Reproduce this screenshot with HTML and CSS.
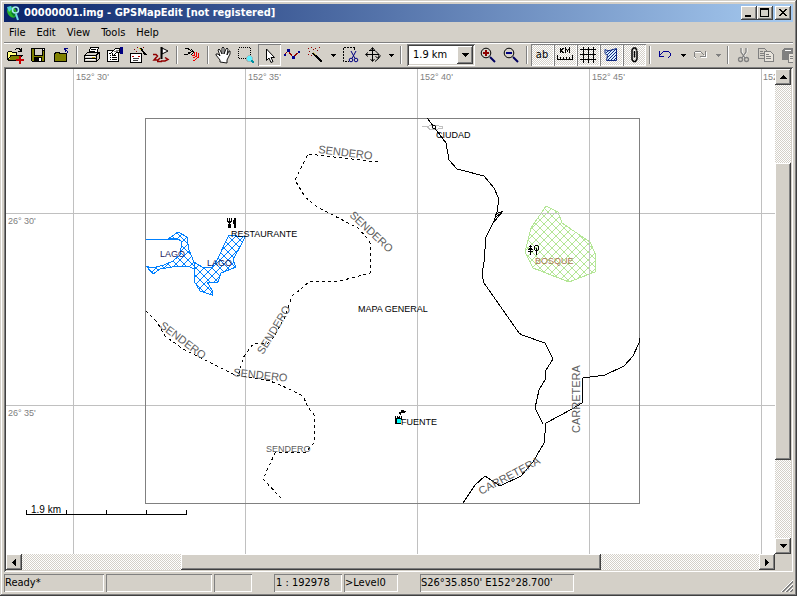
FILE: index.html
```html
<!DOCTYPE html>
<html lang="en">
<head>
<meta charset="utf-8">
<title>00000001.img - GPSMapEdit [not registered]</title>
<link rel="stylesheet" href="styles.css">
</head>
<body>
<div class="window">
  <header class="titlebar">
    <svg class="app-icon" width="16" height="16" viewBox="0 0 16 16"><ellipse cx="6" cy="7" rx="4.500" ry="6" fill="#28b428" transform="rotate(-30 6 7)"/><path d="M1 2l4-1 1 3-3 3z" fill="#48c8d8"/><path d="M5 8l3-3 2 4-2 3z" fill="#0a7830"/><circle cx="9.500" cy="5" r="3" fill="none" stroke="#a8e8f0" stroke-width="1.500"/><path d="M10 9l2 6" stroke="#70d8e8" stroke-width="2"/></svg>
    <h1 class="title">00000001.img - GPSMapEdit [not registered]</h1>
    <button class="caption" aria-label="Minimize"><svg width="12" height="10" shape-rendering="crispEdges"><path d="M2 7h6v2H2z"/></svg></button>
    <button class="caption" aria-label="Maximize"><svg width="12" height="10" shape-rendering="crispEdges"><path d="M1 0h9v9H1zM2 2v6h7V2z" fill-rule="evenodd"/></svg></button>
    <button class="caption close" aria-label="Close"><svg width="12" height="10" shape-rendering="crispEdges"><path d="M2 1h2v1h1v1h2V2h1V1h2v1H9v1H8v1H7v1h1v1h1v1h1v1H8V7H7V6H5v1H4v1H2V7h1V6h1V5h1V4H4V3H3V2H2z"/></svg></button>
  </header>

  <nav class="menu">
    <button>File</button><button>Edit</button><button>View</button><button>Tools</button><button>Help</button>
  </nav>

  <div class="toolbar">
    <button class="tool" aria-label="Open"><svg viewBox="0 0 16 16"><path d="M0 5h1V4h3v1h5v3H4l-3 5H0z" fill="#ffff80"/><path d="M.5 13V5.500l1-1h3l1 1h4V8M.5 13.500L4 8.500h11L11 13.500H.5" fill="none" stroke="#000"/><path d="M4.500 9h9l-3 4h-9z" fill="#808000"/><path d="M8 2.500l2-1h2l2 2M14.500 1v3.500H11" fill="none" stroke="#000"/><path d="M12 9h2v3h3v2h-3v3h-2v-3H9v-2h3z" fill="#c80000"/></svg></button>
    <button class="tool" aria-label="Save"><svg viewBox="0 0 16 16"><path d="M1 1h14v14H2l-1-1z"/><path d="M2 2h2v7h9V4h1v10h-2v-4H4v4H2z" fill="#808000"/><path d="M5 2h7v6H5z" fill="#d4d0c8"/><path d="M13 2h1v1h-1zM9 11h2v3H9z" fill="#fff"/></svg></button>
    <button class="tool" aria-label="Close file"><svg viewBox="0 0 16 16"><path d="M1.500 14.500v-8h1v-1h4v1h7v8z" fill="#808000" stroke="#000"/><path d="M11 1h4v1h-2v1h1v1h1v2h-1V4h-1v1h-1v-2h-1z" fill="#000080"/></svg></button>
    <span class="sep"></span>
    <button class="tool" aria-label="Print"><svg viewBox="0 0 16 16"><path d="M4.500 6.500l2-6h8l-2 6z" fill="#fff" stroke="#000"/><path d="M7 2.500h5M6 4.500h5" stroke="#000"/><path d="M.5 8.500l3-3h12v6l-3 3H.5z" fill="#d4d0c8" stroke="#000"/><path d="M1 8.500h11l3-3M12.500 8v6M1 11.500h11" fill="none" stroke="#000"/><path d="M2 9.500h9M2 12.500h9" stroke="#fff" fill="none"/><path d="M8 10h3v1H8z" fill="#c0a000"/></svg></button>
    <button class="tool" aria-label="Properties"><svg viewBox="0 0 16 16"><path d="M.5 3.500h11v11H.5z" fill="#fff" stroke="#000"/><path d="M2 6.500h2M3 8.500h1M5 8.500h4M3 10.500h1M5 10.500h5M3 12.500h1M5 12.500h5" stroke="#000"/><path d="M4.500 5.500l4-4h4v4h-3l-3 3z" fill="#fff" stroke="#000"/><path d="M7 4.500h4M9 3.500h3" stroke="#808080"/><path d="M13 0h3v7h-3z" fill="#000080"/></svg></button>
    <button class="tool" aria-label="Map properties"><svg viewBox="0 0 16 16"><path d="M.5 6.500h11v9H.5z" fill="#fff" stroke="#000"/><path d="M2 9.500h2M8 9.500h2" stroke="#c00000"/><path d="M3 11.500h6M3 13.500h5" stroke="#404040"/><path d="M10 1l6 7" stroke="#000" stroke-width="2"/><path d="M9 1l2 2" stroke="#e0d000"/><path d="M4 2h1v1H4zM7 0h1v1H7zM6 4h1v1H6zM13 0h1v1h-1z" fill="#800000"/></svg></button>
    <button class="tool" aria-label="Waypoints and tracks"><svg viewBox="0 0 16 16" class="smooth"><path d="M9 1l6 3-6 3z" fill="#fff" stroke="#000"/><path d="M8.500 0v12" stroke="#000" stroke-width="2"/><path d="M0 7.500h3l1.500 1.500-3.500 4h4l2-2M8 14h4l3-1.500-3-2M4 14.500h5" fill="none" stroke="#900000" stroke-width="1.500"/></svg></button>
    <span class="sep"></span>
    <button class="tool" aria-label="GPS"><svg viewBox="0 0 16 16"><path d="M1 1.500h3l4 3-5 3H0M4 5.500h3M7 2l3 3-3 3" fill="none" stroke="#000"/><path d="M10 5l1 3-3 1M12 5l1 4-4 2M14.500 6v4l-5 4" fill="none" stroke="#f00000"/></svg></button>
    <span class="sep"></span>
    <button class="tool" aria-label="Pan"><svg viewBox="0 0 16 16" class="smooth"><path d="M5 15v-2L1 8V7h2l2 2-2-6 1-1 1 1 2 4V1l1-1 1 1v6l2-5 1-1 1 1-1 6 2-4h1v3l-3 6v3z" fill="#fff" stroke="#000" stroke-width=".9"/></svg></button>
    <button class="tool" aria-label="Zoom area"><svg viewBox="0 0 16 16"><path d="M.5 .5h12v11H.5z" fill="none" stroke="#000" stroke-dasharray="1 1"/><circle cx="11.500" cy="11.500" r="3" fill="#60f0ff" stroke="#a0b8b8"/><path d="M13.500 13.500l2.500 2.500" stroke="#0090a0" stroke-width="2"/></svg></button>
    <button class="tool pressed" aria-label="Select" aria-pressed="true"><svg viewBox="0 0 16 16" class="smooth"><path d="M5.500 2v11.500l2.500-2.500 2 4.500 2-1-2-4h3.500z" fill="#fff" stroke="#000"/></svg></button>
    <button class="tool" aria-label="Edit nodes"><svg viewBox="0 0 16 16"><path d="M0 8l4-4 5 6 6-5" fill="none" stroke="#900000"/><path d="M3 2h3v3H3zM8 9h3v3H8zM0 7h2v2H0zM14 4h2v2h-2z" fill="#000090"/></svg></button>
    <button class="tool" aria-label="Create object"><svg viewBox="0 0 16 16"><path d="M6 6l9 9" stroke="#000" stroke-width="2"/><path d="M6 5l3 3" stroke="#d0c060"/><path d="M1 1h1v1H1zM4 0h1v1H4zM8 1h1v1H8zM2 4h1v1H2zM10 3h1v1h-1zM6 2h1v1H6zM1 7h1v1H1zM4 8h1v1H4zM12 0h1v1h-1z" fill="#900000"/></svg></button>
    <button class="drop" aria-label="Create options"><svg viewBox="0 0 5 3"><path d="M0 0h5v1H4v1H3v1H2V2H1V1H0z"/></svg></button>
    <button class="tool" aria-label="Trim area"><svg viewBox="0 0 16 16" class="smooth"><path d="M13 .5H1.500v14H7M12.500 1v3" fill="none" stroke="#000" stroke-dasharray="2 1"/><path d="M9 4l4 7.500M14 4l-4 7.500" stroke="#000080"/><circle cx="9" cy="13" r="1.800" fill="none" stroke="#000080"/><circle cx="14" cy="13" r="1.800" fill="none" stroke="#000080"/></svg></button>
    <button class="tool" aria-label="Move map"><svg viewBox="0 0 16 16" class="smooth"><path d="M7.500 1v13M1 7.500h13M5.500 3l2-2.500 2 2.500M3 5.500L.5 7.500 3 9.500M5.500 12l2 2.500 2-2.500" stroke="#000" fill="none"/><path d="M4 3.500h6l4 4-.5 4-3.500 3M15.500 8.500l-2 3-3-2" fill="none" stroke="#000"/></svg></button>
    <button class="drop" aria-label="Move options"><svg viewBox="0 0 5 3"><path d="M0 0h5v1H4v1H3v1H2V2H1V1H0z"/></svg></button>
    <span class="sep"></span>
    <div class="combo">
      <select aria-label="Scale"><option>1.9 km</option></select>
      <span class="combo-arrow"><svg width="7" height="4" viewBox="0 0 7 4" shape-rendering="crispEdges"><path d="M0 0h7v1H6v1H5v1H4v1H3V3H2V2H1V1H0z"/></svg></span>
    </div>
    <button class="tool" aria-label="Zoom in"><svg viewBox="0 0 16 16" class="smooth"><circle cx="6" cy="6" r="4.800" fill="none" stroke="#000"/><path d="M3 5h2V3h2v2h2v2H7v2H5V7H3z" fill="#900000"/><path d="M10 10l5 5" stroke="#000060" stroke-width="2"/></svg></button>
    <button class="tool" aria-label="Zoom out"><svg viewBox="0 0 16 16" class="smooth"><circle cx="6" cy="6" r="4.800" fill="none" stroke="#000"/><path d="M3 5h6v2H3z" fill="#000080"/><path d="M10 10l5 5" stroke="#000060" stroke-width="2"/></svg></button>
    <span class="sep"></span>
    <button class="tool pressed checked" aria-label="Labels" aria-pressed="true"><span class="ab">ab</span></button>
    <button class="tool pressed checked" aria-label="Scale ruler" aria-pressed="true"><svg viewBox="0 0 16 16"><path d="M3.500 1v5M6.500 1L4 3.500 6.500 6M8.500 6V1l2 3 2-3v5M.5 8v4.500h15V8M3.500 10v2M6.500 10v2M9.500 10v2M12.500 10v2" fill="none" stroke="#000"/></svg></button>
    <button class="tool pressed checked" aria-label="Grid" aria-pressed="true"><svg viewBox="0 0 16 16"><path d="M3.500 0v16M8.500 0v16M13.500 0v16M0 2.500h16M0 7.500h16M0 12.500h16" stroke="#000"/></svg></button>
    <button class="tool pressed checked" aria-label="Fill areas" aria-pressed="true"><svg viewBox="0 0 16 16" class="smooth"><path d="M2 2.500l3 1.500 8.500-2.500v12H3.500l1-5-2.500-2z" fill="#d8f0ff" stroke="#102880"/><path d="M3 6l3-3M4 8l6-6M4 11l9-9M4 14l9-9M7 14l6-6M10 14l3-3" stroke="#102880"/></svg></button>
    <button class="tool pressed checked" aria-label="Attachments" aria-pressed="true"><svg viewBox="0 0 16 16" class="smooth"><path d="M11 4v8l-1.500 2.500h-2L6 12.500V3l1.500-2h2L11 3.500M8.500 4v6.500" fill="none" stroke="#000" stroke-width="1.500"/></svg></button>
    <span class="sep"></span>
    <button class="tool" aria-label="Undo"><svg viewBox="0 0 16 16"><path d="M2 4v5h5M3 8l4-4h4l2 2v3l-2 2" fill="none" stroke="#000090"/></svg></button>
    <button class="drop" aria-label="Undo list"><svg viewBox="0 0 5 3"><path d="M0 0h5v1H4v1H3v1H2V2H1V1H0z"/></svg></button>
    <button class="tool" aria-label="Redo" disabled><svg viewBox="0 0 16 16"><path d="M14 5v5H9M13 9L9 5H4L2 7v3l2 2" fill="none" stroke="#fff"/><path d="M13 4v5H8M12 8L8 4H4L2 6v3l2 2" fill="none" stroke="#808080"/></svg></button>
    <button class="drop" aria-label="Redo list" disabled><svg viewBox="0 0 5 3"><path d="M0 0h5v1H4v1H3v1H2V2H1V1H0z" fill="#808080"/></svg></button>
    <span class="sep"></span>
    <button class="tool" aria-label="Cut" disabled><svg viewBox="0 0 16 16" class="smooth"><path d="M7 1v4l4 6M12 1v4l-4 6" fill="none" stroke="#fff"/><path d="M6 1v4l4 6M11 1v4l-4 6" fill="none" stroke="#808080" stroke-width="1.300"/><circle cx="5.500" cy="12.500" r="2" fill="none" stroke="#808080" stroke-width="1.300"/><circle cx="11.500" cy="12.500" r="2" fill="none" stroke="#808080" stroke-width="1.300"/></svg></button>
    <button class="tool" aria-label="Copy" disabled><svg viewBox="0 0 16 16"><path d="M.5 1.500h6l3 3v7h-9z" fill="#d4d0c8" stroke="#808080"/><path d="M2 4.500h3M2 6.500h4M2 8.500h4" stroke="#808080"/><path d="M6.500 4.500h6l3 3v7h-9z" fill="#e8e4dc" stroke="#808080"/><path d="M8 7.500h3M8 9.500h5M8 11.500h5" stroke="#808080"/></svg></button>
    <button class="tool" aria-label="Paste" disabled><svg viewBox="0 0 16 16"><path d="M1 3l2-2h8l2 2v10H1z" fill="#808080"/><path d="M4 3h6" stroke="#fff"/><path d="M7.500 6.500h8v9h-8z" fill="#e8e4dc" stroke="#808080"/><path d="M9 9.500h4M9 11.500h5" stroke="#808080"/></svg></button>
  </div>

  <main class="view">
    <svg class="map" role="img" aria-label="Map">
      <defs>
        <pattern id="water" width="8" height="8" patternUnits="userSpaceOnUse"><path d="M0 0l8 8M8 0L0 8" stroke="#0080ff"/></pattern>
        <pattern id="wood" width="8" height="8" patternUnits="userSpaceOnUse"><path d="M0 0l8 8M8 0L0 8" stroke="#b4e696"/></pattern>
      </defs>
      <g transform="translate(-6 -69)">
        <g class="lines">
          <path fill="url(#wood)" stroke="#b4e696" d="M546 206l12 6 4 11 28 19 5 11v19l-26 10-36-14-8-16 6-24z"/>
          <path fill="url(#water)" stroke="#0080ff" d="M168 239l10-7 9 5 2 13 5 12 8 5h10l5-7 12-25 16 2-12 23 3 7-15 6-3 9h-11l5 8v5l-12-4-6-10v-12l-4-2-12-1-18 3-7 5-7-8 6 2 12-3 9-4 7-6 2-13-5-4z"/>
          <path fill="none" stroke="#0080ff" d="M146 239.500h34M194.500 262v10"/>
          <path class="grid" d="M73.500 60v900M245.500 60v900M417.500 60v900M589.500 60v900M761.500 60v900M0 213.500h1600M0 405.500h1600"/>
          <path fill="none" stroke="#808080" d="M145.500 118.500h494v385h-494z"/>
          <path fill="none" stroke="#c0c0c0" d="M422 126.500h5l3 3h5l7-1v-2l-7-1h-5l-3 2"/>
          <path class="road" d="M427 118l10 13 9 12 3 17 8 9 27 7 10 12 5 11-2 13-3 9-8 16-2 25-2 12 2 9 35 50 3 2 23 8 8 16-7 11-1 10-6 10-4 18 8 16"/>
          <path class="road" d="M494 222l2-8 7-3-9 11M496 217l4-3"/>
          <path class="road" d="M639 338v5l-6 13-9 10-19 9-22 3-1 25-10 6-26 14-2 20-11 19-12 14-21 10-15-10-10 9-12 18"/>
          <path class="trail" d="M378 162l-70-8-13 26 10 17 12 10 41 21 9 10 3 5v30l-30 8h-30l-9 8-9 7-7 21-12 21-5 5-15 1-10 14-3 12-2 6"/>
          <path class="trail" d="M146 311l11 11 8 14 18 13 20 10 32 16 35 6 17 7 16 8 5 11 6 8v28l-4 4-3 5-32 1-12 26 18 19"/>
          <path class="scale" d="M26.500 510v4.500h160V510M66.500 510v4M106.500 510v4M146.500 510v4"/>
        </g>
        <circle cx="434" cy="127" r="1.700" fill="#fff" stroke="#000"/>
        <g shape-rendering="crispEdges">
          <path d="M227 218h1v3h1v-3h1v3h1v-3h1v4h-1v1h-1v1h1v4h-3v-4h1v-1h-1v-1h-1zM234 218h2v10h-2v-4h-1v-4h1z"/>
          <path d="M530 245h1v1h1v1h-1v1h1v1h1v1h-2v1h2v1h-2v3h-1v-3h-2v-1h2v-1h-2v-1h1v-1h1v-1h-1v-1h1z"/>
          <path d="M535 245h3v1h-3zM534 246h1v4h-1zM538 246h1v4h-1zM535 250h1v1h-1zM537 250h1v1h-1zM536 248h1v7h-1z"/>
          <path d="M401 410h3v1h2v1h-1v1h-4v2h-1v-1h-1v-2h2z"/>
          <path d="M395 416h1v2h1v-2h1v1h1v-1h1v2h1v-2h1v4h-1v4h-6z"/>
          <path d="M397 419h4v4h-4z" fill="#00ffff"/>
        </g>
        <g class="coord">
          <text x="76" y="80">152° 30'</text><text x="248" y="80">152° 35'</text><text x="420" y="80">152° 40'</text><text x="592" y="80">152° 45'</text><text x="763" y="80">152° 50'</text>
          <text x="8" y="224">26° 30'</text><text x="8" y="416">26° 35'</text>
        </g>
        <g class="place">
          <text x="436" y="138">CIUDAD</text><text x="231" y="237">RESTAURANTE</text><text x="358" y="312">MAPA GENERAL</text><text x="401" y="425">FUENTE</text>
          <text class="lake" x="160" y="257">LAGO</text><text class="lake" x="207" y="266">LAGO</text><text class="forest" x="535" y="264">BOSQUE</text><text class="dim" x="266" y="452">SENDERO</text>
        </g>
        <g class="along">
          <text transform="translate(318 153) rotate(7)">SENDERO</text>
          <text transform="translate(349 216) rotate(43)">SENDERO</text>
          <text transform="translate(159 327) rotate(37)">SENDERO</text>
          <text transform="translate(263 355) rotate(-59)">SENDERO</text>
          <text transform="translate(233 376) rotate(6)">SENDERO</text>
          <text transform="translate(481 495) rotate(-28)">CARRETERA</text>
          <text transform="translate(580 433) rotate(-90)">CARRETERA</text>
        </g>
        <text class="scale-label" x="31" y="513">1.9 km</text>
      </g>
    </svg>
    <div class="bar vertical">
      <button class="arrow" aria-label="Scroll up"><svg viewBox="0 0 7 4"><path d="M3 0h1v1h1v1h1v1h1v1H0V3h1V2h1V1h1z"/></svg></button>
      <div class="track"><div class="thumb"></div></div>
      <button class="arrow" aria-label="Scroll down"><svg viewBox="0 0 7 4"><path d="M0 0h7v1H6v1H5v1H4v1H3V3H2V2H1V1H0z"/></svg></button>
    </div>
    <div class="bar horizontal">
      <button class="arrow" aria-label="Scroll left"><svg viewBox="0 0 4 7"><path d="M4 0v7H3V6H2V5H1V4H0V3h1V2h1V1h1V0z"/></svg></button>
      <div class="track"><div class="thumb"></div></div>
      <button class="arrow" aria-label="Scroll right"><svg viewBox="0 0 4 7"><path d="M0 0v7h1V6h1V5h1V4h1V3H3V2H2V1H1V0z"/></svg></button>
    </div>
  </main>

  <footer class="status">
    <span class="cell ready">Ready*</span>
    <span class="cell object"></span>
    <span class="cell small"></span>
    <span class="gap"></span>
    <span class="cell ratio">1 : 192978</span>
    <span class="cell level">&gt;Level0</span>
    <span class="gap"></span>
    <span class="cell position">S26°35.850' E152°28.700'</span>
    <svg class="grip" width="12" height="12" viewBox="0 0 12 12"><path d="M0 12L12 0M4 12l8-8M8 12l4-4" stroke="#fff"/><path d="M1 12L12 1M2 12L12 2M5 12l7-7M6 12l6-6M9 12l3-3M10 12l2-2" stroke="#808080"/></svg>
  </footer>
</div>
</body>
</html>
```
FILE: styles.css
```css
:root {
  --face: #d4d0c8;
  --shade: #808080;
  --dark: #404040;
  --checker: repeating-conic-gradient(#fff 0 25%, #d4d0c8 0 50%) 0 0 / 2px 2px;
}

* { box-sizing: border-box; }

body {
  margin: 0;
  font: 11px/14px "DejaVu Sans Condensed", "DejaVu Sans", sans-serif;
  color: #000;
}

button, select {
  margin: 0;
  padding: 0;
  border: 0;
  border-radius: 0;
  background: none;
  font: inherit;
  color: inherit;
}

svg { display: block; flex: none; }

.window {
  display: flex;
  flex-direction: column;
  height: 100vh;
  padding: 4px;
  overflow: hidden;
  background: var(--face);
  box-shadow: inset -1px -1px var(--dark), inset 1px 1px var(--face), inset -2px -2px var(--shade), inset 2px 2px #fff;
}

.titlebar {
  display: flex;
  flex: none;
  align-items: center;
  height: 18px;
  padding: 0 2px;
  background: linear-gradient(to right, #0a246a, #a6caf0);
}

.title {
  flex: 1;
  margin: 0 0 0 2px;
  overflow: hidden;
  color: #fff;
  font-size: 11px;
  font-weight: bold;
  white-space: nowrap;
}

.caption, .arrow, .thumb, .combo-arrow {
  background: var(--face);
  box-shadow: inset -1px -1px var(--dark), inset 1px 1px #fff, inset -2px -2px var(--shade);
}

.caption { width: 16px; height: 14px; padding: 2px; }
.close { margin-left: 2px; }

.menu {
  display: flex;
  flex: none;
  gap: 11px;
  height: 20px;
  padding: 2px 0 0 5px;
}

.toolbar {
  display: flex;
  flex: none;
  align-items: flex-start;
  height: 25px;
  overflow: hidden;
  border-top: 1px solid var(--shade);
  box-shadow: inset 0 1px #fff;
  padding-top: 1px;
}

.tool {
  flex: none;
  width: 23px;
  height: 22px;
  padding: 3px 4px 3px 3px;
}

.tool svg { width: 16px; height: 16px; shape-rendering: crispEdges; overflow: visible; }
.tool .smooth { shape-rendering: auto; }

.pressed { box-shadow: inset 1px 1px var(--shade), inset -1px -1px #fff; }
.checked { background: var(--checker); }

.ab { font-size: 11px; }

.drop { flex: none; width: 12px; height: 22px; padding: 0 4px; }
.drop svg { width: 5px; height: 3px; shape-rendering: crispEdges; }

.sep {
  flex: none;
  width: 2px;
  height: 18px;
  margin: 2px 3px;
  border-left: 1px solid var(--shade);
  border-right: 1px solid #fff;
}

.combo { display: grid; flex: none; width: 68px; height: 22px; margin: 0 2px; }
.combo > * { grid-area: 1 / 1; }

.combo select {
  appearance: none;
  padding: 0 4px 0 6px;
  background: #fff;
  box-shadow: inset 1px 1px var(--shade), inset -1px -1px #fff, inset 2px 2px var(--dark), inset -2px -2px var(--face);
}

.combo-arrow {
  display: grid;
  place-content: center;
  justify-self: end;
  width: 16px;
  margin: 2px;
  pointer-events: none;
}

.view {
  display: grid;
  flex: 1;
  grid-template: minmax(0, 1fr) 16px / minmax(0, 1fr) 16px;
  min-height: 0;
  padding: 2px;
  box-shadow: inset 1px 1px var(--shade), inset -1px -1px #fff, inset 2px 2px var(--dark);
}

.map { width: 100%; height: 100%; background: #fff; overflow: hidden; }
.lines { shape-rendering: crispEdges; }
.grid { stroke: #c0c0c0; }
.road, .trail, .scale { fill: none; stroke: #000; }
.trail { stroke-dasharray: 3 3; }

.coord, .place { font: 9px "Liberation Sans", sans-serif; }
.coord { fill: #808080; }
.lake { fill: #202060; }
.forest { fill: #a87850; }
.dim { fill: #606060; }
.along { font: 11px "Liberation Sans", sans-serif; fill: #606060; }
.scale-label { font: 10px "Liberation Sans", sans-serif; }

.bar { display: grid; }
.vertical { grid-template-rows: 16px 1fr 16px; }
.horizontal { grid-template-columns: 16px 1fr 16px; }

.track { display: grid; background: var(--checker); }
.vertical .track { grid-template-rows: 78fr 297fr 78fr; }
.horizontal .track { grid-template-columns: 159fr 420fr 158fr; }
.vertical .thumb { grid-row: 2; }
.horizontal .thumb { grid-column: 2; }

.arrow { display: grid; place-content: center; }
.arrow svg { width: 7px; height: 4px; shape-rendering: crispEdges; }
.horizontal .arrow svg { width: 4px; height: 7px; }

.status {
  display: flex;
  flex: none;
  gap: 2px;
  height: 20px;
  padding-top: 2px;
}

.cell {
  flex: none;
  padding: 2px 1px;
  box-shadow: inset 1px 1px var(--shade), inset -1px -1px #fff;
  white-space: nowrap;
}

.ready { width: 100px; }
.object { width: 106px; }
.small { width: 38px; }
.gap { flex: none; width: 18px; }
.ratio { width: 68px; padding-left: 2px; }
.level { width: 54px; }
.position { width: 154px; }
.grip { margin: auto 0 0 auto; }
```
